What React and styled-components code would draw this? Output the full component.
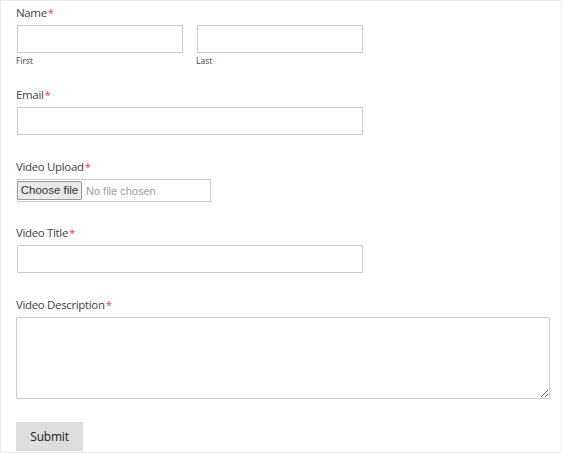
import styled, { createGlobalStyle } from "styled-components";

const GlobalStyle = createGlobalStyle`
  html, body {
    margin: 0;
    padding: 0;
    background: #ffffff;
  }
  * {
    box-sizing: border-box;
  }
`;

const App = () => {
  return (
    <>
      <GlobalStyle />
      <Page>
        <Form onSubmit={(e) => e.preventDefault()}>
          <Field $space="20px">
            <Label>
              Name<Required>*</Required>
            </Label>
            <NameRow>
              <NamePart>
                <Input type="text" $width="166px" />
                <SubLabel>First</SubLabel>
              </NamePart>
              <NamePart>
                <Input type="text" $width="166px" />
                <SubLabel>Last</SubLabel>
              </NamePart>
            </NameRow>
          </Field>

          <Field>
            <Label>
              Email<Required>*</Required>
            </Label>
            <Input type="email" $width="346px" />
          </Field>

          <Field $space="22px">
            <Label>
              Video Upload<Required>*</Required>
            </Label>
            <FileBox>
              <FileButton type="button">Choose file</FileButton>
              <FileStatus>No file chosen</FileStatus>
            </FileBox>
          </Field>

          <Field>
            <Label>
              Video Title<Required>*</Required>
            </Label>
            <Input type="text" $width="346px" />
          </Field>

          <Field>
            <Label>
              Video Description<Required>*</Required>
            </Label>
            <TextArea />
          </Field>

          <SubmitButton type="submit">Submit</SubmitButton>
        </Form>
      </Page>
    </>
  );
};

const Page = styled.div`
  width: 562px;
  height: 453px;
  border: 1px solid #ebebeb;
  overflow: hidden;
  font-family: "Open Sans", "Noto Sans", sans-serif;
  color: #444444;
`;

const Form = styled.form`
  display: flex;
  flex-direction: column;
  align-items: flex-start;
  padding: 3px 0 0 15px;
`;

const Field = styled.div`
  display: flex;
  flex-direction: column;
  align-items: flex-start;
  margin-bottom: ${(p) => p.$space || "23px"};
`;

const Label = styled.label`
  font-size: 11.5px;
  line-height: 18px;
  letter-spacing: -0.35px;
  margin-bottom: 3px;
  color: #444444;
`;

const Required = styled.span`
  color: #ee4444;
  margin-left: 1px;
`;

const NameRow = styled.div`
  display: flex;
  gap: 13px;
`;

const NamePart = styled.div`
  display: flex;
  flex-direction: column;
`;

const Input = styled.input`
  width: ${(p) => p.$width};
  height: 28px;
  margin: 0 0 0 1px;
  border: 1px solid #cccccc;
  border-radius: 1px;
  padding: 0 6px;
  font-family: inherit;
  font-size: 12px;
  outline: none;
  background: #ffffff;
`;

const SubLabel = styled.span`
  font-size: 8.5px;
  line-height: 11px;
  margin-top: 2px;
  color: #444444;
`;

const FileBox = styled.div`
  display: flex;
  align-items: center;
  width: 194px;
  height: 23px;
  margin-left: 1px;
  border: 1px solid #cccccc;
  padding: 0;
`;

const FileButton = styled.button`
  height: 19px;
  width: 65px;
  margin-left: -1px;
  padding: 0;
  background: #e9e9e9;
  border: 1px solid #9a9a9a;
  border-radius: 2px;
  font-family: "Liberation Sans", Arial, sans-serif;
  font-size: 11.5px;
  color: #333333;
  line-height: 17px;
`;

const FileStatus = styled.span`
  margin-left: 4px;
  font-family: "Liberation Sans", Arial, sans-serif;
  font-size: 11px;
  color: #a0a0a0;
`;

const TextArea = styled.textarea`
  width: 534px;
  height: 82px;
  margin: 0;
  border: 1px solid #cccccc;
  border-radius: 1px;
  font-family: inherit;
  font-size: 12px;
  outline: none;
  padding: 4px 6px;
`;

const SubmitButton = styled.button`
  width: 67px;
  height: 29px;
  padding: 0;
  margin: 0;
  background: #dddddd;
  border: none;
  font-family: inherit;
  font-size: 12px;
  letter-spacing: -0.2px;
  color: #222222;
  cursor: pointer;
`;

export default App;
